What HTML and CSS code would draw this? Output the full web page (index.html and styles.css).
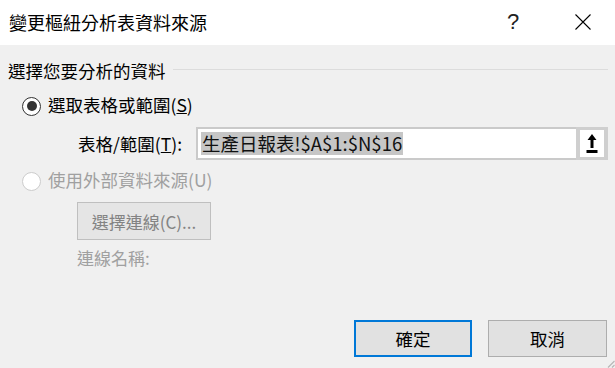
FILE: index.html
```html
<!DOCTYPE html>
<html lang="zh-Hant">
<head>
<meta charset="utf-8">
<title>變更樞紐分析表資料來源</title>
<link rel="stylesheet" href="styles.css">
</head>
<body>
<div class="dialog">
  <div class="titlebar">
    <div class="title">變更樞紐分析表資料來源</div>
    <div class="tb-btn help">?</div>
    <div class="tb-btn close">
      <svg width="16" height="16" viewBox="0 0 16 16"><path d="M0.5 0.5 L15.5 15.5 M15.5 0.5 L0.5 15.5" stroke="#000" stroke-width="1.1" fill="none"/></svg>
    </div>
  </div>
  <div class="content">
    <div class="group-head">
      <span class="group-label">選擇您要分析的資料</span>
      <span class="rule"></span>
    </div>
    <div class="radio-row">
      <span class="radio checked"><span class="dot"></span></span>
      <span class="radio-text">選取表格或範圍(<u>S</u>)</span>
    </div>
    <div class="range-row">
      <span class="range-label">表格/範圍(<u>T</u>):</span>
      <div class="range-input">
        <span class="range-value"><span class="sel">生產日報表!$A$1:$N$16</span></span>
        <span class="collapse-btn">
          <span class="collapse-inner">
            <svg width="12" height="20" viewBox="0 0 12 20"><path d="M6 0 L10.5 6 L7.5 6 L7.5 14 L4.5 14 L4.5 6 L1.5 6 Z" fill="#000"/><rect x="0.5" y="16" width="11" height="3" fill="#000"/></svg>
          </span>
        </span>
      </div>
    </div>
    <div class="radio-row second disabled">
      <span class="radio"></span>
      <span class="radio-text">使用外部資料來源(U)</span>
    </div>
    <div class="conn-btn">選擇連線(C)...</div>
    <div class="conn-name">連線名稱:</div>
    <div class="actions">
      <div class="btn default">確定</div>
      <div class="btn cancel">取消</div>
    </div>
  </div>
  <svg class="grip" width="10" height="10" viewBox="0 0 10 10"><path d="M9.5 3 L3 9.5 M9.5 7 L7 9.5" stroke="#b8b8b8" stroke-width="1.2" fill="none"/></svg>
</div>
</body>
</html>
```

FILE: styles.css
```css
* { box-sizing: border-box; }
html, body {
  margin: 0;
  padding: 0;
  width: 615px;
  height: 368px;
  overflow: hidden;
  background: #f0f0f0;
}
body {
  font-family: "Noto Sans CJK TC", "Noto Sans", sans-serif;
  color: #000;
}
.dialog {
  position: relative;
  width: 615px;
  height: 368px;
  display: flex;
  flex-direction: column;
}
.titlebar {
  height: 45px;
  background: #fff;
  display: flex;
  align-items: center;
  padding-left: 9px;
  flex-shrink: 0;
}
.title {
  font-size: 18px;
  line-height: 24px;
  flex: 1;
  margin-top: -2px;
}
.tb-btn {
  width: 70px;
  height: 45px;
  display: flex;
  align-items: center;
  justify-content: center;
}
.help {
  font-family: "Liberation Sans", sans-serif;
  font-size: 22px;
  color: #222;
  margin-top: -2px;
}
.close {
  margin-right: -3px;
  margin-top: -2px;
}
.content {
  flex: 1;
  background: #f0f0f0;
  padding: 14px 7px 0 8px;
  display: flex;
  flex-direction: column;
  font-size: 17.5px;
}
.group-head {
  display: flex;
  align-items: center;
  height: 24px;
}
.group-label {
  line-height: 24px;
}
.rule {
  flex: 1;
  height: 1px;
  background: #dcdcdc;
  margin-left: 7px;
  margin-top: -3px;
}
.radio-row {
  display: flex;
  align-items: center;
  height: 24px;
  margin-top: 10px;
  padding-left: 14px;
}
.radio-row.second {
  margin-top: 8px;
}
.radio {
  width: 19px;
  height: 19px;
  border-radius: 50%;
  border: 1.6px solid #333;
  background: #fff;
  display: flex;
  align-items: center;
  justify-content: center;
  margin-right: 7px;
  margin-top: 2px;
}
.radio .dot {
  width: 10px;
  height: 10px;
  border-radius: 50%;
  background: #333;
}
.radio-text {
  line-height: 24px;
}
.disabled .radio {
  border-color: #cccccc;
}
.disabled .radio-text {
  color: #a0a0a0;
}
.range-row {
  display: flex;
  align-items: center;
  margin-top: 10px;
  padding-left: 70px;
}
.range-label {
  line-height: 24px;
  margin-right: 14px;
}
.range-input {
  flex: 1;
  height: 33px;
  background: #fff;
  border: 2px solid #cacaca;
  display: flex;
  align-items: stretch;
}
.range-value {
  flex: 1;
  display: flex;
  align-items: center;
  padding-left: 3px;
  font-size: 18.5px;
  color: #111;
}
.sel {
  background: #c6c6c6;
  line-height: 23px;
  padding: 0 1px;
}
.collapse-btn {
  width: 32px;
  margin: -2px -2px -2px 0;
  background: #cfcfcf;
  display: flex;
  align-items: center;
  justify-content: center;
  padding: 3px 4px 3px 4px;
}
.collapse-inner {
  flex: 1;
  align-self: stretch;
  background: #fff;
  display: flex;
  align-items: center;
  justify-content: center;
}
.conn-btn {
  margin-top: 10px;
  margin-left: 69px;
  width: 134px;
  height: 38px;
  background: #e5e5e5;
  border: 1.5px solid #bfbfbf;
  color: #838383;
  display: flex;
  align-items: center;
  justify-content: center;
  font-size: 17px;
}
.conn-name {
  margin-top: 6px;
  margin-left: 69px;
  line-height: 24px;
  color: #a0a0a0;
  font-size: 17px;
}
.actions {
  display: flex;
  justify-content: flex-end;
  gap: 16px;
  margin-top: 50px;
  margin-right: 1px;
}
.btn {
  height: 37px;
  background: #e1e1e1;
  display: flex;
  align-items: center;
  justify-content: center;
  font-size: 17.5px;
}
.btn.default {
  width: 118px;
  border: 2px solid #0078d7;
}
.btn.cancel {
  width: 119px;
  border: 1.5px solid #adadad;
}
.grip {
  position: absolute;
  right: 0;
  bottom: 0;
}
```
